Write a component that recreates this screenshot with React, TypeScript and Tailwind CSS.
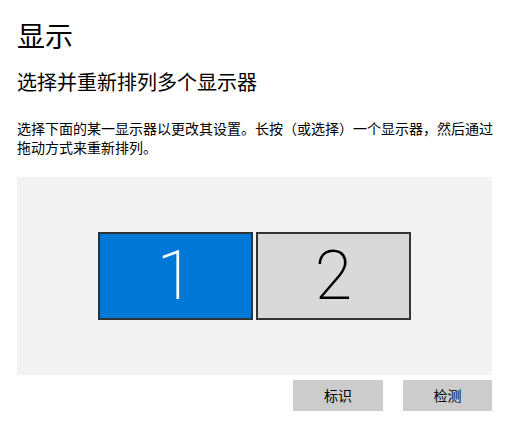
const cjk = "font-['Microsoft_YaHei','Noto_Sans_CJK_SC',sans-serif]";

function Monitor({ n, active }: { n: number; active?: boolean }) {
    return (
        <div
            className={
                "flex h-[88px] w-[155px] items-center justify-center border-2 border-[#333333] " +
                (active ? "bg-[#0078d7] text-white" : "bg-[#d9d9d9] text-black")
            }
        >
            <span className="font-['Segoe_UI','Roboto',sans-serif] text-[68px] font-extralight leading-none">
                {n}
            </span>
        </div>
    );
}

export default function App() {
    return (
        <div className={"h-[445px] w-[515px] bg-white pl-[17px] pr-[20px] text-black " + cjk}>
            <h1 className="pt-[19px] text-[28px] leading-[32px] font-normal">显示</h1>
            <h2 className="mt-[18px] text-[20px] leading-[26px] font-normal">选择并重新排列多个显示器</h2>
            <p className="mt-[24px] text-[14px] leading-[19px]">
                选择下面的某一显示器以更改其设置。长按（或选择）一个显示器，然后通过拖动方式来重新排列。
            </p>
            <div className="mt-[20px] flex h-[198px] w-[475px] items-center justify-center gap-[3px] bg-[#f2f2f2]">
                <Monitor n={1} active />
                <Monitor n={2} />
            </div>
            <div className="mt-[5px] flex w-[475px] justify-end gap-[20px]">
                <button className="h-[31px] w-[90px] bg-[#cccccc] text-[14px]">标识</button>
                <button className="h-[31px] w-[89px] bg-[#cccccc] text-[14px]">检测</button>
            </div>
        </div>
    );
}
